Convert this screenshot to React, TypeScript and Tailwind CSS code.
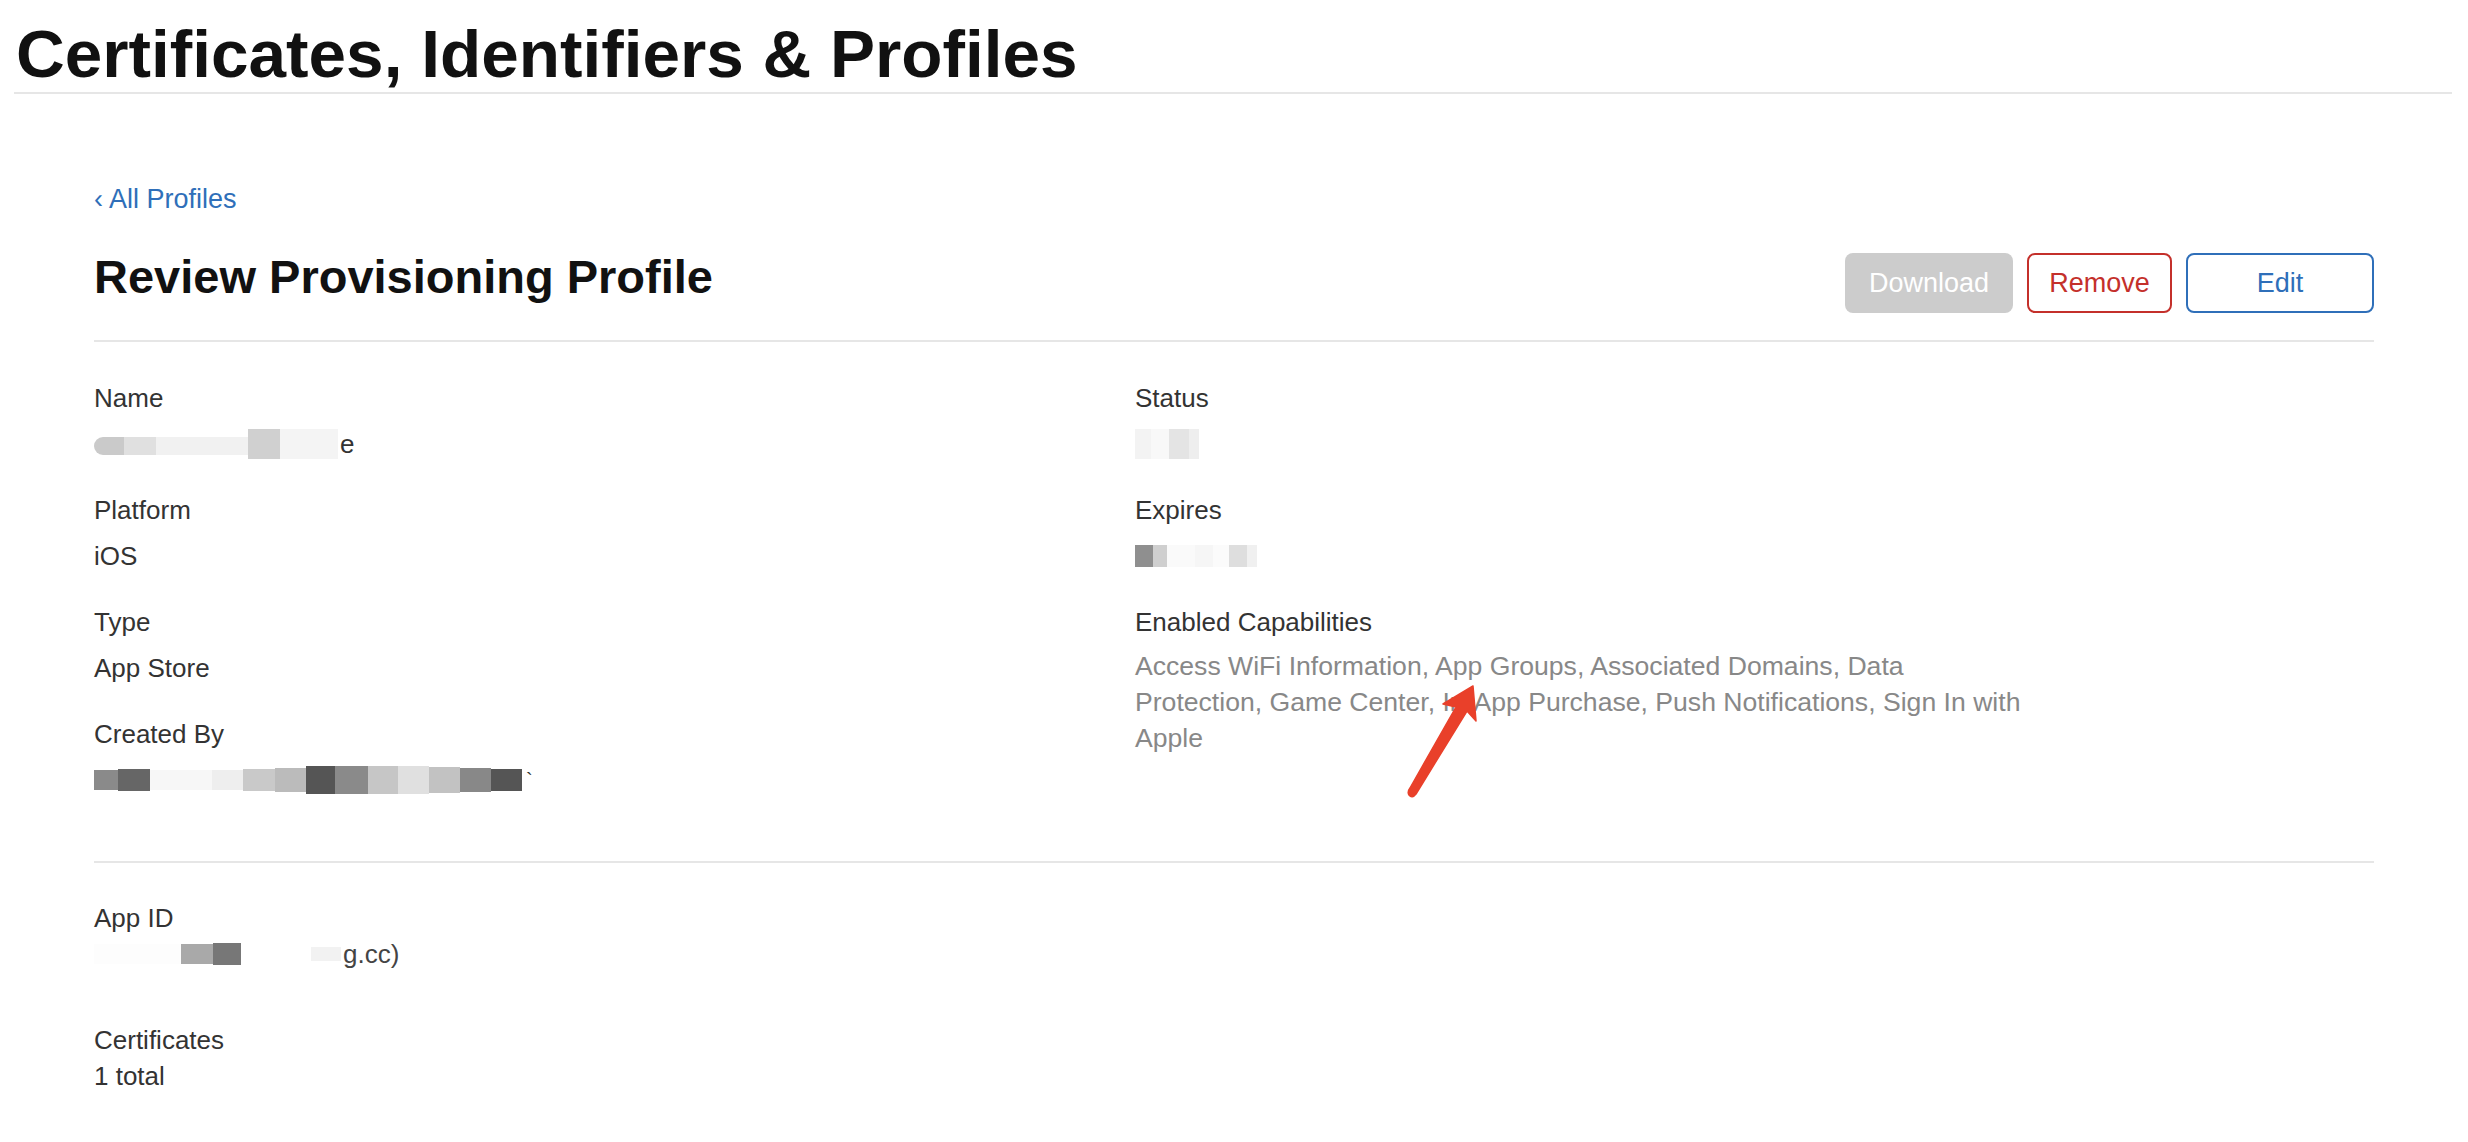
import React from "react";

const font = { fontFamily: '"Liberation Sans", Arial, sans-serif' };

function Label({ children }: { children: React.ReactNode }) {
  return <div className="text-[26px] leading-[36px] text-[#333333]">{children}</div>;
}

function Blocks({ items, h = "h-[22px]" }: { items: { w: string; c: string; extra?: string }[]; h?: string }) {
  return (
    <div className={`flex items-center ${h}`}>
      {items.map((b, i) => (
        <div key={i} className={`${b.w} ${b.c} ${b.extra ?? "h-full"}`} />
      ))}
    </div>
  );
}

export default function App() {
  return (
    <div className="relative min-h-[1142px] w-[2468px] bg-white overflow-hidden" style={font}>
      {/* Header */}
      <header className="pl-[14px] pr-[16px] pt-[20px]">
        <h1 className="pl-[2px] text-[67.5px] leading-[67px] font-bold text-[#111111]">
          Certificates, Identifiers &amp; Profiles
        </h1>
        <div className="mt-[5px] h-[2px] bg-[#e6e6e6]" />
      </header>

      <main className="ml-[94px] w-[2280px]">
        <a className="mt-[92px] block text-[27px] leading-[26px] text-[#2f6fb9]">‹ All Profiles</a>

        <div className="mt-[41px] flex items-start justify-between">
          <h2 className="text-[47px] leading-[47px] font-bold text-[#111111]">Review Provisioning Profile</h2>
          <div className="flex gap-[14px]">
            <button className="h-[60px] w-[168px] rounded-[8px] bg-[#cccccc] text-[27px] text-white">Download</button>
            <button className="h-[60px] w-[145px] rounded-[8px] border-2 border-[#c4302b] text-[27px] text-[#c4302b]">
              Remove
            </button>
            <button className="h-[60px] w-[188px] rounded-[8px] border-2 border-[#2f6fb9] text-[27px] text-[#2f6fb9]">
              Edit
            </button>
          </div>
        </div>

        <div className="mt-[27px] h-[2px] bg-[#e6e6e6]" />

        {/* Details */}
        <div className="mt-[38px] grid grid-cols-[1041px_1fr]">
          <div className="flex flex-col">
            <Label>Name</Label>
            <div className="mt-[10px] flex h-[36px] items-center">
              <div className="flex h-[30px] items-end">
                <div className="h-[18px] w-[30px] rounded-l-full bg-[#cacaca] mb-[4px]" />
                <div className="h-[18px] w-[32px] bg-[#e0e0e0] mb-[4px]" />
                <div className="h-[18px] w-[92px] bg-[#f1f1f1] mb-[4px]" />
                <div className="h-[30px] w-[32px] bg-[#d0d0d0]" />
                <div className="h-[30px] w-[58px] bg-[#f4f4f4]" />
              </div>
              <span className="ml-[2px] text-[26px] text-[#333333]">e</span>
            </div>

            <div className="mt-[30px]">
              <Label>Platform</Label>
            </div>
            <div className="mt-[10px]">
              <Label>iOS</Label>
            </div>

            <div className="mt-[30px]">
              <Label>Type</Label>
            </div>
            <div className="mt-[10px]">
              <Label>App Store</Label>
            </div>

            <div className="mt-[30px]">
              <Label>Created By</Label>
            </div>
            <div className="mt-[10px] flex h-[36px] items-center">
              <div className="flex h-[28px] items-center">
                <div className="h-[20px] w-[24px] bg-[#8a8a8a]" />
                <div className="h-[22px] w-[32px] bg-[#666666]" />
                <div className="h-[20px] w-[62px] bg-[#f7f7f7]" />
                <div className="h-[20px] w-[31px] bg-[#eeeeee]" />
                <div className="h-[22px] w-[32px] bg-[#c9c9c9]" />
                <div className="h-[24px] w-[31px] bg-[#bbbbbb]" />
                <div className="h-[28px] w-[29px] bg-[#555555]" />
                <div className="h-[28px] w-[33px] bg-[#8a8a8a]" />
                <div className="h-[28px] w-[30px] bg-[#c6c6c6]" />
                <div className="h-[28px] w-[31px] bg-[#e0e0e0]" />
                <div className="h-[26px] w-[31px] bg-[#c2c2c2]" />
                <div className="h-[24px] w-[31px] bg-[#888888]" />
                <div className="h-[22px] w-[31px] bg-[#555555]" />
              </div>
              <span className="ml-[4px] text-[20px] text-[#333333]">`</span>
            </div>
          </div>

          <div className="flex flex-col">
            <Label>Status</Label>
            <div className="mt-[10px] flex h-[36px] items-center">
              <Blocks
                h="h-[30px]"
                items={[
                  { w: "w-[16px]", c: "bg-[#f3f3f3]" },
                  { w: "w-[18px]", c: "bg-[#f8f8f8]" },
                  { w: "w-[20px]", c: "bg-[#e4e4e4]" },
                  { w: "w-[10px]", c: "bg-[#eeeeee]" },
                ]}
              />
            </div>

            <div className="mt-[30px]">
              <Label>Expires</Label>
            </div>
            <div className="mt-[10px] flex h-[36px] items-center">
              <div className="flex h-[24px] items-center">
                <div className="h-[22px] w-[18px] bg-[#8f8f8f]" />
                <div className="h-[22px] w-[14px] bg-[#cfcfcf]" />
                <div className="h-[22px] w-[28px] bg-[#fafafa]" />
                <div className="h-[22px] w-[18px] bg-[#f6f6f6]" />
                <div className="h-[22px] w-[16px] bg-[#fbfbfb]" />
                <div className="h-[22px] w-[18px] bg-[#dedede]" />
                <div className="h-[22px] w-[10px] bg-[#f0f0f0]" />
              </div>
            </div>

            <div className="mt-[30px]">
              <Label>Enabled Capabilities</Label>
            </div>
            <div className="mt-[8px] max-w-[900px] text-[26.6px] leading-[36px] text-[#888888]">
              Access WiFi Information, App Groups, Associated Domains, Data Protection, Game Center, In-App Purchase,
              Push Notifications, Sign In with Apple
            </div>
          </div>
        </div>

        <div className="mt-[63px] h-[2px] bg-[#e6e6e6]" />

        <div className="mt-[37px] flex flex-col">
          <Label>App ID</Label>
          <div className="flex h-[36px] items-center">
            <div className="flex h-[24px] items-center">
              <div className="h-[20px] w-[87px] bg-[#fdfdfd]" />
              <div className="h-[20px] w-[32px] bg-[#a9a9a9]" />
              <div className="h-[22px] w-[28px] bg-[#777777]" />
              <div className="h-[20px] w-[70px] bg-white" />
              <div className="h-[14px] w-[30px] bg-[#f2f2f2]" />
            </div>
            <span className="ml-[2px] text-[26px] text-[#444444]">g.cc)</span>
          </div>

          <div className="mt-[50px]">
            <Label>Certificates</Label>
          </div>
          <Label>1 total</Label>
        </div>
      </main>

      {/* red annotation arrow */}
      <svg
        className="pointer-events-none absolute left-[1400px] top-[680px]"
        width="90"
        height="125"
        viewBox="0 0 90 125"
      >
        <path
          d="M73,6 L76,41 L67,31 L16,114 Q12,119 9,115 Q7,112 10,108 L56,27 L43,24 Z"
          fill="#e9402a"
          stroke="#e9402a"
          strokeWidth="1.5"
          strokeLinejoin="round"
        />
      </svg>
    </div>
  );
}
